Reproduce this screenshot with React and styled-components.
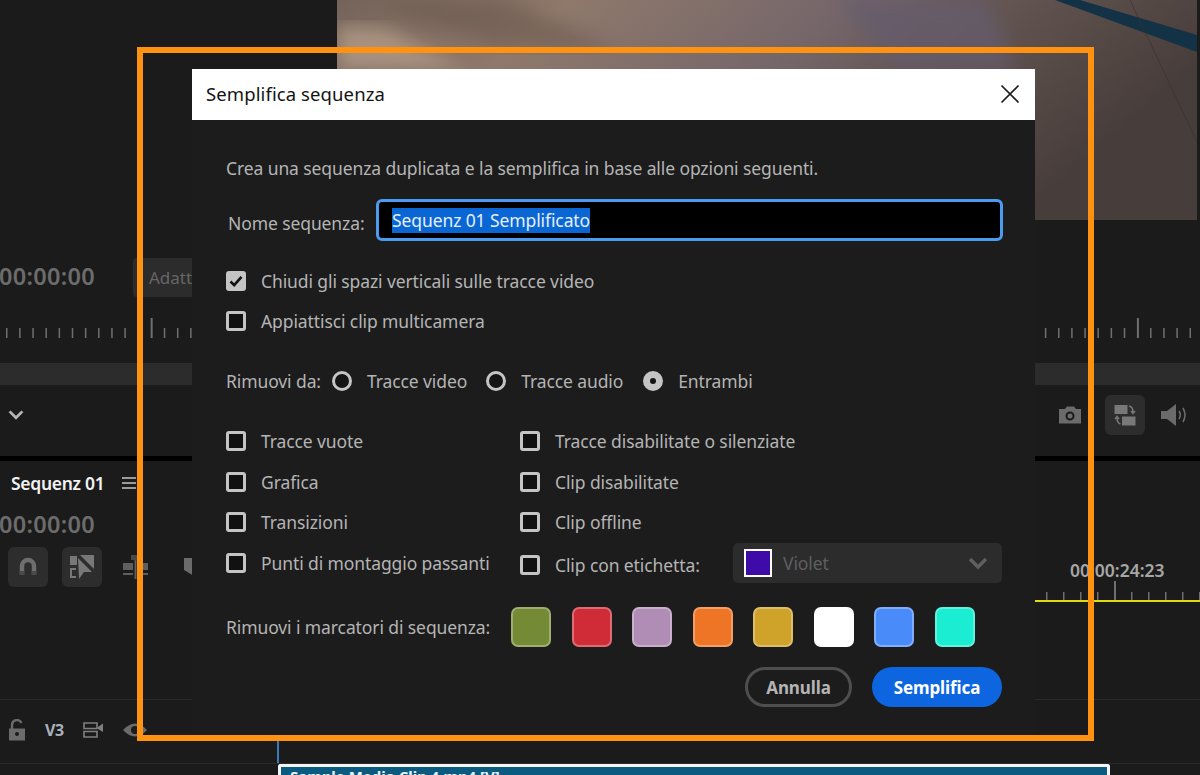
import styled, { createGlobalStyle } from 'styled-components'

const GlobalStyle = createGlobalStyle`
  html, body {
    margin: 0;
    padding: 0;
    background: #1b1b1b;
  }
  * {
    box-sizing: border-box;
  }
`

const FONT = `"Noto Sans", "Open Sans", sans-serif`

const Page = styled.div`
  position: relative;
  width: 1200px;
  height: 775px;
  overflow: hidden;
  background: #1b1b1b;
  font-family: ${FONT};
  display: flex;
  flex-direction: column;
`

/* background: program monitor */
const ProgramPanel = styled.div`
  height: 456px;
  flex: none;
  display: flex;
  flex-direction: column;
`

const PreviewRow = styled.div`
  height: 220px;
  flex: none;
  padding: 0 3px 0 337px;
`

const Preview = styled.svg`
  display: block;
  width: 860px;
  height: 220px;
`

const TimecodeRow = styled.div`
  display: flex;
  align-items: center;
  gap: 38px;
  margin-top: 38px;
  height: 39px;
  flex: none;
`

const Timecode = styled.div`
  width: 96px;
  margin-left: -1px;
  padding-bottom: 3px;
  font-size: 23.5px;
  font-weight: 600;
  color: #6c6c6c;
  letter-spacing: 0.3px;
  white-space: nowrap;
`

const FitButton = styled.div`
  width: 100px;
  height: 39px;
  padding-left: 16px;
  border-radius: 4px;
  background: #2c2c2c;
  color: #666;
  font-size: 17px;
  line-height: 39px;
`

const RulerSvg = styled.svg`
  display: block;
  flex: none;
  margin-top: ${p => p.$top || 0}px;
`

const Scrollbar = styled.div`
  height: 22px;
  margin-top: 25px;
  flex: none;
  background: #2c2c2c;
`

const Transport = styled.div`
  height: 71px;
  flex: none;
  display: flex;
  align-items: center;
  justify-content: space-between;
  padding: 0 12px 12px 8px;
`

const TransportIcons = styled.div`
  display: flex;
  align-items: center;
  gap: 16px;
`

const CameraSlot = styled.div`
  display: flex;
  margin-right: 7px;
`

const IconButton = styled.div`
  width: 40px;
  height: 40px;
  flex: none;
  display: flex;
  align-items: center;
  justify-content: center;
  border-radius: 6px;
  background: #2d2d2d;
`

const PanelDivider = styled.div`
  height: 5px;
  flex: none;
  background: #000;
`

/* background: timeline */
const TimelineHeader = styled.div`
  height: 141px;
  flex: none;
  display: flex;
`

const TimelineLeft = styled.div`
  width: 277px;
  flex: none;
  padding-top: 8px;
  display: flex;
  flex-direction: column;
`

const TabRow = styled.div`
  display: flex;
  align-items: center;
  gap: 18px;
  height: 27px;
  padding-left: 11px;
`

const TabLabel = styled.div`
  font-size: 17.5px;
  font-weight: 600;
  letter-spacing: -0.3px;
  color: #f2f2f2;
`

const TimelineCode = styled(Timecode)`
  margin-top: 13px;
  height: 30px;
  padding-bottom: 0;
  line-height: 30px;
`

const ToolRow = styled.div`
  display: flex;
  align-items: center;
  gap: 14px;
  margin-top: 8px;
  padding-left: 8px;
`

const LooseIcons = styled.div`
  display: flex;
  align-items: center;
  gap: 36px;
  margin-left: 7px;
`

const TimelineRight = styled.div`
  flex: 1;
  display: flex;
  flex-direction: column;
  justify-content: flex-end;
`

const PlayTime = styled.div`
  padding-left: 793px;
  font-size: 17.5px;
  font-weight: 600;
  color: #a6a6a6;
  white-space: nowrap;
  line-height: 22px;
`

const YellowLine = styled.div`
  height: 2px;
  background: #e2da10;
`

const EmptyTrack = styled.div`
  height: 98px;
  flex: none;
  border-bottom: 1px solid #2b2b2b;
`

const TrackRow = styled.div`
  position: relative;
  height: 64px;
  flex: none;
  border-bottom: 1px solid #2b2b2b;
  display: flex;
  align-items: center;
  gap: 19px;
  padding: 0 0 4px 8px;
`

const TrackName = styled.div`
  font-size: 16px;
  font-weight: 700;
  letter-spacing: -0.5px;
  color: #a9b2bc;
`

const Playhead = styled.div`
  position: absolute;
  left: 277px;
  top: 40px;
  bottom: 0;
  width: 2px;
  background: #3f79bd;
`

const Clip = styled.div`
  width: 832px;
  height: 20px;
  flex: none;
  margin-left: 278px;
  border: 3px solid #f4f4f4;
  border-bottom: none;
  border-radius: 3px 3px 0 0;
  background: #0b5a80;
  color: #e8f2f6;
  font-size: 15px;
  font-weight: 700;
  line-height: 19px;
  padding-left: 9px;
  white-space: nowrap;
`

/* overlay: orange callout and dialog */
const Callout = styled.div`
  position: absolute;
  left: 137px;
  top: 47px;
  width: 957px;
  height: 694px;
  border: 6px solid #ff9210;
  z-index: 2;
  pointer-events: none;
`

const Dialog = styled.div`
  position: absolute;
  left: 192px;
  top: 69px;
  width: 843px;
  height: 667px;
  background: #1c1c1c;
  z-index: 1;
  display: flex;
  flex-direction: column;
`

const TitleBar = styled.div`
  height: 51px;
  flex: none;
  display: flex;
  align-items: center;
  justify-content: space-between;
  padding: 0 15px 2px 14px;
  background: #fff;
`

const Title = styled.div`
  font-size: 18.5px;
  color: #141414;
  letter-spacing: 0.1px;
`

const DialogBody = styled.div`
  padding: 33px 33px 0 34px;
  display: flex;
  flex-direction: column;
  color: #b4b4b4;
  font-size: 17.5px;
  letter-spacing: -0.1px;
`

const Intro = styled.div`
  height: 30px;
  line-height: 30px;
  white-space: nowrap;
`

const NameRow = styled.div`
  display: flex;
  align-items: center;
  gap: 12px;
  margin: 16px -1px 0 0;
  height: 42px;
  padding-left: 2px;
`

const NameLabel = styled.label`
  width: 136px;
  flex: none;
  padding-top: 6px;
  white-space: nowrap;
`

const NameField = styled.div`
  flex: 1;
  height: 42px;
  padding-left: 13px;
  border: 3px solid #4b9cf0;
  border-radius: 6px;
  background: #000;
  display: flex;
  align-items: center;
`

const Selection = styled.span`
  background: #0a66d2;
  color: #e4efff;
  line-height: 25px;
  white-space: nowrap;
`

const Section = styled.div`
  display: flex;
  flex-direction: column;
  margin-top: 20px;
`

const CheckRow = styled.label`
  display: flex;
  align-items: center;
  gap: 15px;
  height: ${p => p.$height || 40.5}px;
  white-space: nowrap;
`

const CheckBox = styled.span`
  width: 20px;
  height: 20px;
  flex: none;
  display: flex;
  align-items: center;
  justify-content: center;
  border: 3px solid #c4c4c4;
  border-radius: 3px;
  background: ${p => (p.$checked ? '#c4c4c4' : '#111')};
`

const RadioRow = styled.div`
  display: flex;
  align-items: center;
  height: 40px;
  margin-top: 20px;
  white-space: nowrap;
`

const Radio = styled.span`
  width: 20px;
  height: 20px;
  flex: none;
  margin: 0 15px 0 ${p => p.$gap}px;
  border-radius: 50%;
  border: ${p => (p.$checked ? '7px' : '3px')} solid #c4c4c4;
  background: #141414;
`

const OptionsGrid = styled.div`
  display: grid;
  grid-template-columns: 294px 1fr;
  margin-top: 20px;
`

const LabelRow = styled.div`
  display: flex;
  align-items: center;
  height: 40.5px;
`

const TaggedLabel = styled(CheckRow)`
  width: 213px;
  flex: none;
  padding-top: 4px;
`

const LabelSelect = styled.div`
  flex: 1;
  height: 40px;
  display: flex;
  align-items: center;
  padding: 0 14px 0 11px;
  border-radius: 5px;
  background: #2c2c2c;
  color: #5f5f5f;
`

const SelectSwatch = styled.span`
  width: 28px;
  height: 28px;
  flex: none;
  margin-right: 11px;
  border: 2px solid #fff;
  background: #3e0aa8;
`

const SelectText = styled.span`
  flex: 1;
`

const MarkerRow = styled.div`
  display: flex;
  align-items: center;
  margin-top: 23px;
  height: 41px;
  white-space: nowrap;
`

const MarkerLabel = styled.div`
  width: 285px;
  flex: none;
`

const Swatches = styled.div`
  display: flex;
  gap: 20.5px;
`

const Swatch = styled.button`
  width: 40px;
  height: 40px;
  padding: 0;
  border-radius: 7px;
  border: 2px solid rgba(255, 255, 255, 0.3);
  background: ${p => p.$color};
`

const Actions = styled.div`
  display: flex;
  justify-content: flex-end;
  gap: 20px;
  margin-top: 20px;
`

const Button = styled.button`
  height: 40px;
  padding: 0;
  width: ${p => (p.$primary ? '130px' : '107px')};
  border-radius: 20px;
  border: ${p => (p.$primary ? 'none' : '3px solid #4e4e4e')};
  background: ${p => (p.$primary ? '#0d66e0' : 'transparent')};
  color: ${p => (p.$primary ? '#fff' : '#b4b4b4')};
  font-family: ${FONT};
  font-size: 17px;
  font-weight: 700;
  letter-spacing: -0.1px;
`

const GREY = '#6b6b6b'

const Ticks = ({ width, height, top, start, step, count, majorAt, majorEvery, minorTop }) => (
  <RulerSvg width={width} height={height} $top={top}>
    {Array.from({ length: count }, (_, i) => {
      const major = (i - majorAt) % majorEvery === 0
      const x = start + step * i
      return <rect key={i} x={x} y={major ? 0 : minorTop} width={major ? 2 : 1.5} height={major ? height : height - minorTop} fill="#6f6f6f" />
    })}
  </RulerSvg>
)

const PreviewPicture = () => (
  <Preview viewBox="0 0 860 220">
    <defs>
      <linearGradient id="base" x1="0" y1="0" x2="1" y2="0.3">
        <stop offset="0" stopColor="#75635a" />
        <stop offset="0.25" stopColor="#8f796b" />
        <stop offset="0.55" stopColor="#75666a" />
        <stop offset="0.72" stopColor="#635551" />
        <stop offset="1" stopColor="#473d3a" />
      </linearGradient>
      <filter id="softer" colorInterpolationFilters="sRGB"><feGaussianBlur stdDeviation="9" /></filter>
    </defs>
    <rect width="860" height="220" fill="url(#base)" />
    <polygon points="0,25 50,28 130,70 0,70" fill="#a8927f" filter="url(#softer)" />
    <polygon points="30,0 160,48 280,50 170,0" fill="#665449" opacity="0.5" filter="url(#softer)" />
    <polygon points="500,0 650,0 680,70 560,70" fill="#655c6c" opacity="0.8" filter="url(#softer)" />
    <polygon points="718,0 743,0 860,35 860,52" fill="#143246" />
    <path d="M793 0 L860 142" stroke="#3a302b" strokeWidth="1" fill="none" opacity="0.6" />
  </Preview>
)

const CloseIcon = () => (
  <svg width="20" height="20" viewBox="0 0 20 20">
    <path d="M1.5 1.5 L18.5 18.5 M18.5 1.5 L1.5 18.5" stroke="#1a1a1a" strokeWidth="1.7" fill="none" />
  </svg>
)

const TickMark = () => (
  <svg width="14" height="14" viewBox="0 0 14 14">
    <path d="M1.5 7.5 L5.2 11.2 L12.5 2.8" stroke="#111" strokeWidth="2.6" fill="none" />
  </svg>
)

const Chevron = ({ color = '#b5b5b5', size = 16 }) => (
  <svg width={size} height={size * 0.7} viewBox="0 0 20 14">
    <path d="M2 3 L10 11 L18 3" stroke={color} strokeWidth="3.4" fill="none" />
  </svg>
)

const CameraIcon = () => (
  <svg width="24" height="18" viewBox="0 0 24 18">
    <path fillRule="evenodd" fill={GREY} d="M1 3 H7 L9 0.5 H16 L18 3 H23 V17.5 H1 Z M12 5.5 A4.5 4.5 0 1 0 12 14.5 A4.5 4.5 0 1 0 12 5.5 Z M12 7.5 A2.5 2.5 0 1 1 12 12.5 A2.5 2.5 0 1 1 12 7.5 Z" />
  </svg>
)

const SwapIcon = () => (
  <svg width="22" height="22" viewBox="0 0 22 22">
    <rect x="0.5" y="1" width="13" height="9" fill="#787878" />
    <rect x="8" y="12.5" width="13.5" height="9" fill="#787878" />
    <path d="M15 2 Q19 3 19 8 M17 7 L19 9.5 L21 7" stroke="#787878" strokeWidth="1.5" fill="none" />
    <path d="M6.5 20 Q3 19 3 14 M1 15 L3 12.5 L5 15" stroke="#787878" strokeWidth="1.5" fill="none" />
  </svg>
)

const SpeakerIcon = () => (
  <svg width="27" height="24" viewBox="0 0 27 24">
    <path fill={GREY} d="M0 8 H6 L15 1 V23 L6 16 H0 Z" />
    <path d="M18 8 Q20.5 12 18 16 M22 5 Q26 12 22 19" stroke={GREY} strokeWidth="1.6" fill="none" />
  </svg>
)

const MagnetIcon = () => (
  <svg width="20" height="20" viewBox="0 0 20 20">
    <path d="M4 18 V9 A6 6 0 0 1 16 9 V18" stroke="#6e6e6e" strokeWidth="4.5" fill="none" />
    <rect x="1.8" y="14" width="4.4" height="4" fill="#4a4a4a" />
    <rect x="13.8" y="14" width="4.4" height="4" fill="#4a4a4a" />
  </svg>
)

const LinkedIcon = () => (
  <svg width="26" height="25" viewBox="0 0 26 25">
    <rect x="1" y="1" width="7" height="9" fill="#787878" />
    <path d="M1 13 H7 V15 H3 V21 H7 V23 H1 Z" fill="#787878" />
    <path d="M11 0 H25 V14 Z" fill="#787878" />
    <path d="M9 3 L23 17 H15 L10 24 Z" fill="#787878" />
  </svg>
)

const SnapIcon = () => (
  <svg width="25" height="24" viewBox="0 0 25 24">
    <rect x="11.5" y="0" width="2" height="24" fill="#5f5f5f" />
    <rect x="8" y="0" width="9" height="5" fill="#484848" />
    <rect x="0" y="8" width="10" height="7" fill="#5f5f5f" />
    <rect x="15" y="8" width="10" height="7" fill="#5f5f5f" />
    <rect x="0" y="18" width="10" height="2" fill="#5f5f5f" />
    <rect x="15" y="18" width="10" height="2" fill="#5f5f5f" />
  </svg>
)

const MarkerIcon = () => (
  <svg width="10" height="18" viewBox="0 0 10 18">
    <path d="M0 0 H10 V18 L0 12 Z" fill={GREY} />
  </svg>
)

const MenuIcon = () => (
  <svg width="14" height="12" viewBox="0 0 14 12">
    <path d="M0 1 H14 M0 6 H14 M0 11 H14" stroke="#c6c6c6" strokeWidth="1.5" />
  </svg>
)

const LockIcon = () => (
  <svg width="18" height="22" viewBox="0 0 18 22">
    <path d="M4 10 V5.5 A5 5 0 0 1 13.5 4" stroke={GREY} strokeWidth="2.4" fill="none" />
    <path fillRule="evenodd" fill={GREY} d="M1 9.5 H17 V21.5 H1 Z M9 13 A2 2 0 1 0 9 17 A2 2 0 1 0 9 13 Z" />
  </svg>
)

const SyncIcon = () => (
  <svg width="21" height="16" viewBox="0 0 21 16">
    <path d="M1 1 H14 V6.5 H1 Z M1 9.5 H14 V15 H1 Z" stroke="#808080" strokeWidth="1.6" fill="none" />
    <path d="M15 5 L20 1.5 V10 L15 7 Z" fill="#808080" />
  </svg>
)

const EyeIcon = () => (
  <svg width="24" height="14" viewBox="0 0 24 14">
    <path fillRule="evenodd" fill={GREY} d="M0 7 Q12 -6 24 7 Q12 20 0 7 Z M12 3 A4 4 0 1 0 12 11 A4 4 0 1 0 12 3 Z" />
  </svg>
)

const markerColors = ['#748a35', '#cf2c38', '#b08db5', '#ee7426', '#cfa22a', '#ffffff', '#4a8bfa', '#1bedd2']

const Check = ({ label, checked, height }) => (
  <CheckRow $height={height}>
    <CheckBox $checked={checked}>{checked && <TickMark />}</CheckBox>
    {label}
  </CheckRow>
)

const App = () => (
  <Page>
    <GlobalStyle />
    <ProgramPanel>
      <PreviewRow>
        <PreviewPicture />
      </PreviewRow>
      <TimecodeRow>
        <Timecode>00:00:00</Timecode>
        <FitButton>Adatta</FitButton>
      </TimecodeRow>
      <Ticks width={1200} height={20} top={21} start={6} step={13.15} count={91} majorAt={11} majorEvery={25} minorTop={10} />
      <Scrollbar />
      <Transport>
        <Chevron />
        <TransportIcons>
          <CameraSlot><CameraIcon /></CameraSlot>
          <IconButton><SwapIcon /></IconButton>
          <SpeakerIcon />
        </TransportIcons>
      </Transport>
    </ProgramPanel>
    <PanelDivider />
    <TimelineHeader>
      <TimelineLeft>
        <TabRow>
          <TabLabel>Sequenz 01</TabLabel>
          <MenuIcon />
        </TabRow>
        <TimelineCode>00:00:00</TimelineCode>
        <ToolRow>
          <IconButton><MagnetIcon /></IconButton>
          <IconButton><LinkedIcon /></IconButton>
          <LooseIcons>
            <SnapIcon />
            <MarkerIcon />
          </LooseIcons>
        </ToolRow>
      </TimelineLeft>
      <TimelineRight>
        <PlayTime>00:00:24:23</PlayTime>
        <Ticks width={923} height={19} start={4} step={17} count={55} majorAt={49} majorEvery={100} minorTop={11} />
        <YellowLine />
      </TimelineRight>
    </TimelineHeader>
    <EmptyTrack />
    <TrackRow>
      <LockIcon />
      <TrackName>V3</TrackName>
      <SyncIcon />
      <EyeIcon />
      <Playhead />
    </TrackRow>
    <Clip>Sample Media Clip 4.mp4 [V]</Clip>

    <Dialog>
      <TitleBar>
        <Title>Semplifica sequenza</Title>
        <CloseIcon />
      </TitleBar>
      <DialogBody>
        <Intro>Crea una sequenza duplicata e la semplifica in base alle opzioni seguenti.</Intro>
        <NameRow>
          <NameLabel>Nome sequenza:</NameLabel>
          <NameField><Selection>Sequenz 01 Semplificato</Selection></NameField>
        </NameRow>
        <Section>
          <Check label="Chiudi gli spazi verticali sulle tracce video" checked height={40} />
          <Check label="Appiattisci clip multicamera" height={40} />
        </Section>
        <RadioRow>
          Rimuovi da:
          <Radio $gap={11} />
          Tracce video
          <Radio $gap={19} />
          Tracce audio
          <Radio $gap={20} $checked />
          Entrambi
        </RadioRow>
        <OptionsGrid>
          <Check label="Tracce vuote" />
          <Check label="Tracce disabilitate o silenziate" />
          <Check label="Grafica" />
          <Check label="Clip disabilitate" />
          <Check label="Transizioni" />
          <Check label="Clip offline" />
          <Check label="Punti di montaggio passanti" />
          <LabelRow>
            <TaggedLabel>
              <CheckBox />
              Clip con etichetta:
            </TaggedLabel>
            <LabelSelect>
              <SelectSwatch />
              <SelectText>Violet</SelectText>
              <Chevron color="#5f5f5f" size={20} />
            </LabelSelect>
          </LabelRow>
        </OptionsGrid>
        <MarkerRow>
          <MarkerLabel>Rimuovi i marcatori di sequenza:</MarkerLabel>
          <Swatches>
            {markerColors.map(color => <Swatch key={color} $color={color} />)}
          </Swatches>
        </MarkerRow>
        <Actions>
          <Button>Annulla</Button>
          <Button $primary>Semplifica</Button>
        </Actions>
      </DialogBody>
    </Dialog>
    <Callout />
  </Page>
)

export default App
